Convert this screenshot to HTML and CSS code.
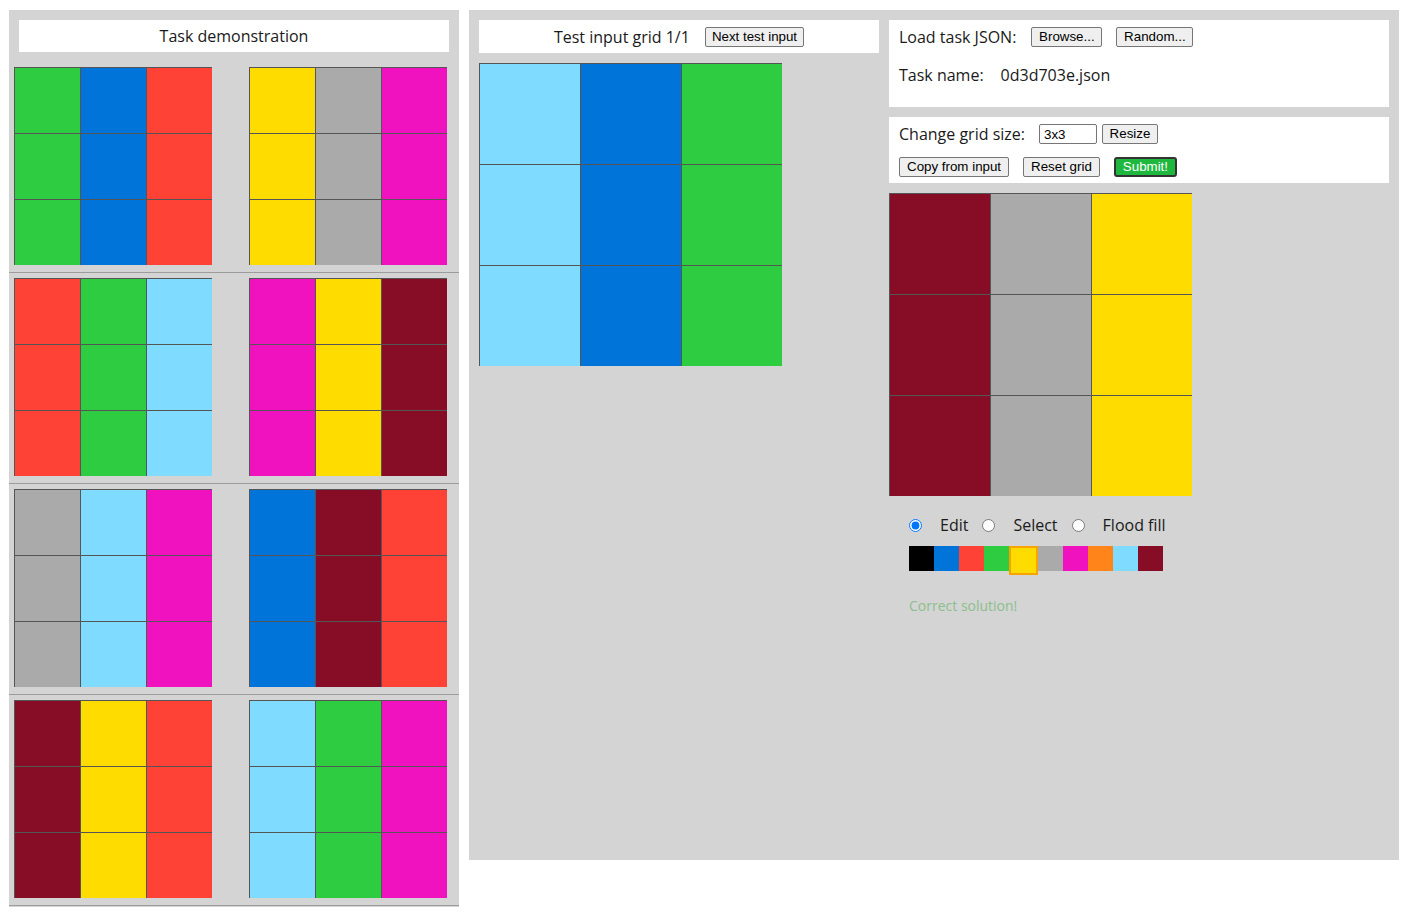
FILE: index.html
```html
<!DOCTYPE html>
<html>
<head>
<meta charset="utf-8">
<title>ARC testing interface</title>
<link rel="stylesheet" href="styles.css">
</head>
<body>
<div class="demo-panel">
  <div class="panel-title">Task demonstration</div>
  <div class="pair">
    <div class="grid small"><div class="c s3"></div><div class="c s1"></div><div class="c s2"></div><div class="c s3"></div><div class="c s1"></div><div class="c s2"></div><div class="c s3"></div><div class="c s1"></div><div class="c s2"></div></div>
    <div class="grid small"><div class="c s4"></div><div class="c s5"></div><div class="c s6"></div><div class="c s4"></div><div class="c s5"></div><div class="c s6"></div><div class="c s4"></div><div class="c s5"></div><div class="c s6"></div></div>
  </div>
  <div class="pair">
    <div class="grid small"><div class="c s2"></div><div class="c s3"></div><div class="c s8"></div><div class="c s2"></div><div class="c s3"></div><div class="c s8"></div><div class="c s2"></div><div class="c s3"></div><div class="c s8"></div></div>
    <div class="grid small"><div class="c s6"></div><div class="c s4"></div><div class="c s9"></div><div class="c s6"></div><div class="c s4"></div><div class="c s9"></div><div class="c s6"></div><div class="c s4"></div><div class="c s9"></div></div>
  </div>
  <div class="pair">
    <div class="grid small"><div class="c s5"></div><div class="c s8"></div><div class="c s6"></div><div class="c s5"></div><div class="c s8"></div><div class="c s6"></div><div class="c s5"></div><div class="c s8"></div><div class="c s6"></div></div>
    <div class="grid small"><div class="c s1"></div><div class="c s9"></div><div class="c s2"></div><div class="c s1"></div><div class="c s9"></div><div class="c s2"></div><div class="c s1"></div><div class="c s9"></div><div class="c s2"></div></div>
  </div>
  <div class="pair">
    <div class="grid small"><div class="c s9"></div><div class="c s4"></div><div class="c s2"></div><div class="c s9"></div><div class="c s4"></div><div class="c s2"></div><div class="c s9"></div><div class="c s4"></div><div class="c s2"></div></div>
    <div class="grid small"><div class="c s8"></div><div class="c s3"></div><div class="c s6"></div><div class="c s8"></div><div class="c s3"></div><div class="c s6"></div><div class="c s8"></div><div class="c s3"></div><div class="c s6"></div></div>
  </div>
</div>

<div class="workspace">
  <div class="test-col">
    <div class="test-title"><span>Test input grid 1/1</span><button class="btn">Next test input</button></div>
    <div class="grid big"><div class="c s8"></div><div class="c s1"></div><div class="c s3"></div><div class="c s8"></div><div class="c s1"></div><div class="c s3"></div><div class="c s8"></div><div class="c s1"></div><div class="c s3"></div></div>
  </div>
  <div class="editor-col">
    <div class="box load-box">
      <div class="row"><span class="label">Load task JSON:</span><button class="btn browse">Browse...</button><button class="btn random">Random...</button></div>
      <div class="row name-row"><span class="label">Task name:</span><span class="task-name">0d3d703e.json</span></div>
    </div>
    <div class="box size-box">
      <div class="row"><span class="label">Change grid size:</span><input class="size-input" type="text" value="3x3"><button class="btn resize">Resize</button></div>
      <div class="row row2"><button class="btn">Copy from input</button><button class="btn">Reset grid</button><button class="btn submit">Submit!</button></div>
    </div>
    <div class="grid big"><div class="c s9"></div><div class="c s5"></div><div class="c s4"></div><div class="c s9"></div><div class="c s5"></div><div class="c s4"></div><div class="c s9"></div><div class="c s5"></div><div class="c s4"></div></div>
    <div class="tools">
      <input type="radio" name="tool" id="t-edit" checked><label for="t-edit">Edit</label>
      <input type="radio" name="tool" id="t-select"><label for="t-select">Select</label>
      <input type="radio" name="tool" id="t-fill"><label for="t-fill">Flood fill</label>
    </div>
    <div class="palette">
      <div class="sw s0"></div><div class="sw s1"></div><div class="sw s2"></div><div class="sw s3"></div><div class="sw s4 selected"></div><div class="sw s5"></div><div class="sw s6"></div><div class="sw s7"></div><div class="sw s8"></div><div class="sw s9"></div>
    </div>
    <div class="status">Correct solution!</div>
  </div>
</div>
</body>
</html>
```

FILE: styles.css
```css
html, body {
  margin: 0;
  padding: 0;
  background: #fff;
}
body {
  font-family: "Open Sans", "Noto Sans", sans-serif;
  font-size: 16px;
  color: #1a1a1a;
  display: flex;
  align-items: flex-start;
  gap: 10px;
  padding: 10px 0 0 9px;
}

.s0 { background: #000000; }
.s1 { background: #0074D9; }
.s2 { background: #FF4136; }
.s3 { background: #2ECC40; }
.s4 { background: #FFDC00; }
.s5 { background: #AAAAAA; }
.s6 { background: #F012BE; }
.s7 { background: #FF851B; }
.s8 { background: #7FDBFF; }
.s9 { background: #870C25; }

.grid {
  display: grid;
}
.grid .c {
  box-sizing: border-box;
  border-top: 1px solid #555;
  border-left: 1px solid #555;
}
.grid.small {
  grid-template-columns: repeat(3, 66px);
  grid-auto-rows: 66px;
}
.grid.big {
  grid-template-columns: repeat(3, 101px);
  grid-auto-rows: 101px;
}

/* left panel */
.demo-panel {
  width: 450px;
  background: #d4d4d4;
  padding-top: 10px;
  padding-bottom: 1px;
}
.panel-title {
  background: #fff;
  margin: 0 10px 10px;
  height: 32px;
  line-height: 32px;
  text-align: center;
}
.pair {
  display: flex;
  gap: 37px;
  padding: 5px 0 7px 5px;
  border-bottom: 1px solid #9c9c9c;
}

/* workspace */
.workspace {
  box-sizing: border-box;
  width: 930px;
  height: 850px;
  background: #d4d4d4;
  padding: 10px;
  display: flex;
  gap: 10px;
}
.test-col {
  width: 400px;
}
.test-title {
  background: #fff;
  height: 33px;
  display: flex;
  align-items: center;
  justify-content: center;
  gap: 15px;
  margin-bottom: 10px;
}

.btn {
  font-family: "Liberation Sans", Arial, sans-serif;
  font-size: 13.33px;
  color: #000;
  background: #efefef;
  border: 1px solid #767676;
  border-radius: 2px;
  height: 20px;
  padding: 0 6px;
  margin: 0;
  line-height: 18px;
}

.editor-col {
  width: 500px;
}
.box {
  background: #fff;
  box-sizing: border-box;
  padding: 7px 10px 0;
  margin-bottom: 10px;
}
.load-box {
  height: 87px;
}
.size-box {
  height: 66px;
}
.row {
  display: flex;
  align-items: center;
  height: 20px;
}
.label {
  margin-right: 15px;
}
.browse {
  width: 71px;
}
.random {
  width: 77px;
  margin-left: 14px;
}
.name-row {
  margin-top: 16px;
  height: 24px;
}
.task-name {
  margin-left: 2px;
}
.size-box .row:first-child .label {
  margin-right: 14px;
}
.size-input {
  box-sizing: border-box;
  width: 58px;
  height: 20px;
  border: 1px solid #767676;
  border-radius: 2px;
  font-family: "Liberation Sans", Arial, sans-serif;
  font-size: 13.33px;
  padding: 0 4px;
  margin: 0 5px 0 0;
}
.resize {
  width: 56px;
}
.row2 {
  margin-top: 13px;
  gap: 14px;
}
.row2 .btn {
  padding: 0 7px;
}
.row2 .submit {
  background: #1fb83f;
  color: #fff;
  border: 2px solid #333;
  border-radius: 3px;
  padding: 0 7px;
  line-height: 16px;
}

.tools {
  display: flex;
  align-items: center;
  height: 24px;
  margin-top: 17px;
  padding-left: 20px;
}
.tools input {
  margin: 0;
  width: 13px;
  height: 13px;
}
.tools label {
  margin-left: 18px;
  margin-right: 14px;
}
.palette {
  display: flex;
  align-items: flex-start;
  margin-top: 9px;
  padding-left: 20px;
  height: 29px;
}
.sw {
  width: 25px;
  height: 25px;
}
.sw.selected {
  border: 2px solid #f7a400;
}
.status {
  margin-top: 21px;
  padding-left: 20px;
  font-size: 14px;
  color: #8cbf8c;
}
```
